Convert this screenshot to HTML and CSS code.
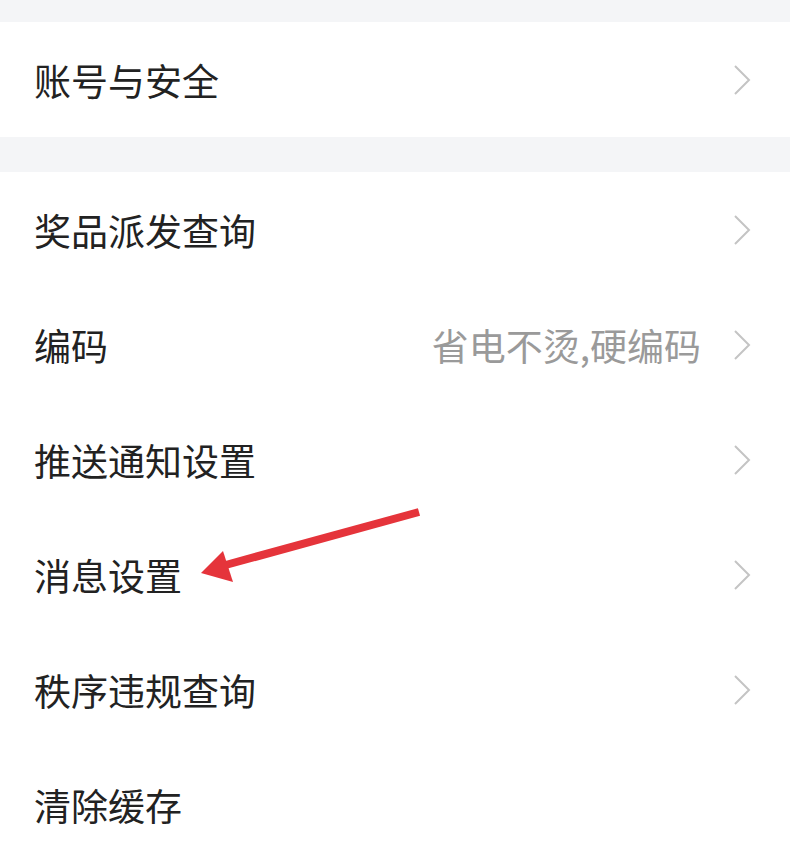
FILE: index.html
```html
<!DOCTYPE html>
<html lang="zh-CN">
<head>
<meta charset="utf-8">
<title>设置</title>
<link rel="stylesheet" href="styles.css">
</head>
<body>
<div class="page">
  <div class="gap gap-top"></div>
  <section class="group">
    <div class="row"><span class="label">账号与安全</span><span class="right"><svg class="chev" viewBox="0 0 18 32"><polyline points="2,2 16,16 2,30"/></svg></span></div>
  </section>
  <div class="gap gap-mid"></div>
  <section class="group">
    <div class="row"><span class="label">奖品派发查询</span><span class="right"><svg class="chev" viewBox="0 0 18 32"><polyline points="2,2 16,16 2,30"/></svg></span></div>
    <div class="row"><span class="label">编码</span><span class="right"><span class="value">省电不烫,硬编码</span><svg class="chev" viewBox="0 0 18 32"><polyline points="2,2 16,16 2,30"/></svg></span></div>
    <div class="row"><span class="label">推送通知设置</span><span class="right"><svg class="chev" viewBox="0 0 18 32"><polyline points="2,2 16,16 2,30"/></svg></span></div>
    <div class="row"><span class="label">消息设置</span><span class="right"><svg class="chev" viewBox="0 0 18 32"><polyline points="2,2 16,16 2,30"/></svg></span></div>
    <div class="row"><span class="label">秩序违规查询</span><span class="right"><svg class="chev" viewBox="0 0 18 32"><polyline points="2,2 16,16 2,30"/></svg></span></div>
    <div class="row"><span class="label">清除缓存</span></div>
  </section>
  <svg class="arrow" width="790" height="858" viewBox="0 0 790 858">
    <line x1="419" y1="512" x2="222" y2="566" stroke="#e5343b" stroke-width="8" stroke-linecap="butt"/>
    <polygon points="201,573 223,551 233,582" fill="#e5343b"/>
  </svg>
</div>
</body>
</html>
```
FILE: styles.css
```css
html, body {
  margin: 0;
  padding: 0;
  background: #ffffff;
}
.page {
  position: relative;
  width: 790px;
  height: 858px;
  overflow: hidden;
  font-family: "Noto Sans CJK SC", "Noto Sans", sans-serif;
}
.gap {
  background: #f4f5f7;
}
.gap-top { height: 22px; }
.gap-mid { height: 35px; }
.group {
  background: #ffffff;
}
.row {
  height: 115px;
  display: flex;
  align-items: center;
  justify-content: space-between;
  padding: 0 39px 0 34px;
}
.label {
  font-size: 37px;
  color: #222222;
  line-height: 1;
  padding-top: 1px;
}
.right {
  display: flex;
  align-items: center;
  gap: 32px;
}
.value {
  font-size: 37px;
  color: #9a9a9a;
  line-height: 1;
  padding-top: 1px;
}
.chev {
  width: 18px;
  height: 32px;
  display: block;
  fill: none;
  stroke: #c4c4c4;
  stroke-width: 2;
}
.arrow {
  position: absolute;
  left: 0;
  top: 0;
  pointer-events: none;
}
```
